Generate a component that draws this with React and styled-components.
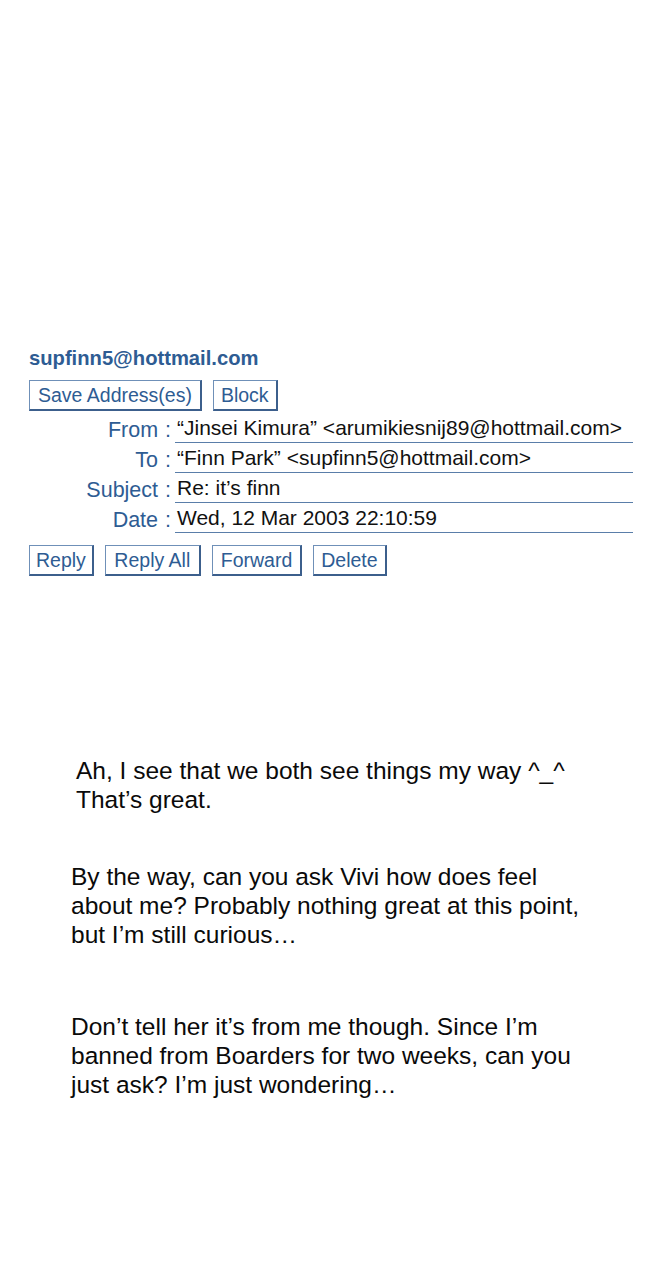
import React from "react";
import styled, { createGlobalStyle } from "styled-components";

const Global = createGlobalStyle`
  html, body {
    margin: 0;
    padding: 0;
    background: #ffffff;
  }
  body {
    font-family: "Liberation Sans", Arial, sans-serif;
  }
`;

const Page = styled.div`
  width: 667px;
  min-height: 1280px;
  padding-top: 344px;
  box-sizing: border-box;
`;

const Header = styled.section`
  padding-left: 29px;
  color: #2e5c93;
`;

const Account = styled.div`
  font-size: 20.2px;
  font-weight: 700;
  line-height: 28px;
`;

const Toolbar = styled.div`
  display: flex;
  gap: 11px;
  margin-top: ${(p) => p.$top || 0}px;
`;

const Button = styled.button`
  font-family: "Liberation Sans", Arial, sans-serif;
  font-size: 19.5px;
  color: #2e5c93;
  background: #ffffff;
  height: 31px;
  padding: 0 ${(p) => p.$pad || 7}px;
  border-style: solid;
  border-color: #6f90b8 #3c5f8c #3c5f8c #6f90b8;
  border-width: 1px 2px 2px 1px;
  line-height: 27px;
  box-sizing: border-box;
`;

const Fields = styled.div`
  display: grid;
  grid-template-columns: 142px 458px;
  column-gap: 4px;
  margin-top: 2px;
`;

const Label = styled.div`
  text-align: right;
  font-size: 21.5px;
  line-height: 30px;
  height: 30px;
  padding-top: 2px;
  box-sizing: border-box;
  color: #2e5c93;
  white-space: nowrap;
  word-spacing: 1px;
`;

const Value = styled.div`
  font-size: 21px;
  line-height: 28px;
  height: 30px;
  padding: 1px 0 0 2px;
  box-sizing: border-box;
  color: #111111;
  border-bottom: 1px solid #5a7ea9;
  white-space: nowrap;
`;

const Message = styled.article`
  margin-top: 180px;
  color: #0a0a0a;
  font-size: 24.5px;
  line-height: 29px;
`;

const Para = styled.p`
  margin: 0;
  margin-top: ${(p) => p.$top}px;
  padding-left: ${(p) => p.$left}px;
`;

const fields = [
  ["From :", "\u201CJinsei Kimura\u201D <arumikiesnij89@hottmail.com>"],
  ["To :", "\u201CFinn Park\u201D <supfinn5@hottmail.com>"],
  ["Subject :", "Re: it\u2019s finn"],
  ["Date :", "Wed, 12 Mar 2003 22:10:59"],
];

export default function App() {
  return (
    <Page>
      <Global />
      <Header>
        <Account>supfinn5@hottmail.com</Account>
        <Toolbar $top={8}>
          <Button $pad={8}>Save Address(es)</Button>
          <Button $pad={7}>Block</Button>
        </Toolbar>
        <Fields>
          {fields.map(([label, value]) => (
            <React.Fragment key={label}>
              <Label>{label}</Label>
              <Value>{value}</Value>
            </React.Fragment>
          ))}
        </Fields>
        <Toolbar $top={12}>
          <Button $pad={6}>Reply</Button>
          <Button $pad={8.5}>Reply All</Button>
          <Button $pad={8}>Forward</Button>
          <Button $pad={7}>Delete</Button>
        </Toolbar>
      </Header>
      <Message>
        <Para $top={0} $left={76}>
          Ah, I see that we both see things my way ^_^
          <br />
          That&rsquo;s great.
        </Para>
        <Para $top={48} $left={71}>
          By the way, can you ask Vivi how does feel
          <br />
          about me? Probably nothing great at this point,
          <br />
          but I&rsquo;m still curious&hellip;
        </Para>
        <Para $top={63} $left={71}>
          Don&rsquo;t tell her it&rsquo;s from me though. Since I&rsquo;m
          <br />
          banned from Boarders for two weeks, can you
          <br />
          just ask? I&rsquo;m just wondering&hellip;
        </Para>
      </Message>
    </Page>
  );
}
